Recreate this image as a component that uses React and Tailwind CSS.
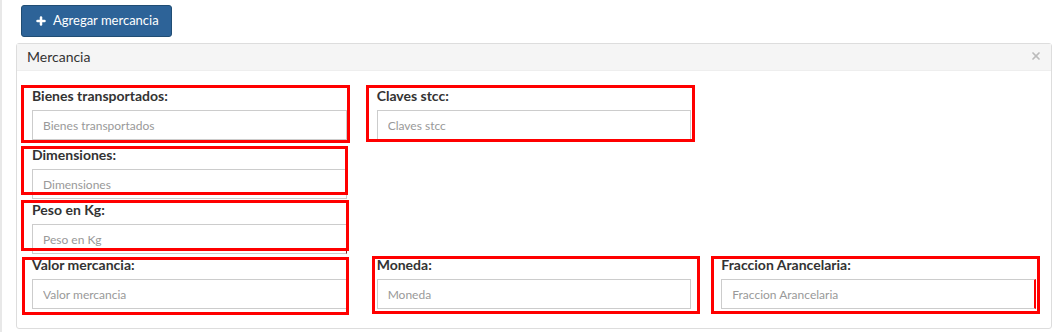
import { Plus, X } from "lucide-react";

const font = { fontFamily: "Lato, 'Open Sans', sans-serif" };

function Field({ label, box, inputClass = "" }) {
  return (
    <div className="relative">
      <label className="block h-[20px] leading-[20px] text-[14px] font-bold text-[#333] mb-[4px]">
        {label}:
      </label>
      <input
        type="text"
        placeholder={label}
        className={
          "block w-full h-[30px] border border-[#ccc] bg-white px-[10px] text-[12px] text-[#555] placeholder:text-[#999] outline-none " +
          inputClass
        }
      />
      <div className={"absolute border-[3px] border-[#ff0000] pointer-events-none " + box} />
    </div>
  );
}

export default function App() {
  return (
    <div className="min-h-screen bg-white" style={font}>
      <div className="border-l-2 border-[#e8e8e8] pl-[14px] pt-[5px] min-h-[332px]">
        <button className="ml-[5px] h-[32px] w-[151px] flex items-center gap-[6px] pl-[13px] rounded-[3px] bg-[#2d6398] border border-[#204d74] text-white text-[13px]">
          <Plus size={12} strokeWidth={5} />
          Agregar mercancia
        </button>

        <div className="mt-[6px] w-[1036px] border border-[#ddd] rounded-[3px] bg-white">
          <div className="h-[27px] bg-[#f5f5f5] border-b border-[#eee] flex items-center justify-between pl-[10px] pr-[9px] pb-[1px] text-[14px] text-[#333]">
            <span>Mercancia</span>
            <X size={12} strokeWidth={3.5} className="text-[#bbb] mb-[2px]" />
          </div>

          <div className="pt-[15px] pb-[19px] grid grid-cols-3">
            <div className="px-[15px]">
              <Field label="Bienes transportados" box="-left-[11px] -right-[3px] -top-[1px] -bottom-[3px]" />
            </div>
            <div className="px-[15px]">
              <Field label="Claves stcc" box="-left-[11px] -right-[4px] -top-[1px] -bottom-[2px]" />
            </div>
            <div />

            <div className="px-[15px] mt-[5px]">
              <Field label="Dimensiones" box="-left-[11px] -right-[1px] top-[1px] bottom-[4px]" />
            </div>
            <div />
            <div />

            <div className="px-[15px] mt-[1px]">
              <Field
                label="Peso en Kg"
                inputClass="!border-r-[#8b1a1a]"
                box="-left-[11px] -right-[2px] top-0 bottom-[3px]"
              />
            </div>
            <div />
            <div />

            <div className="px-[15px] mt-[1px]">
              <Field label="Valor mercancia" box="-left-[10px] -right-[2px] top-[2px] -bottom-[6px]" />
            </div>
            <div className="px-[15px] mt-[1px]">
              <Field label="Moneda" box="-left-[5px] -right-[9px] top-[1px] -bottom-[5px]" />
            </div>
            <div className="px-[15px] mt-[1px]">
              <Field
                label="Fraccion Arancelaria"
                inputClass="!border-r-[#ff0000] !border-r-2"
                box="-left-[10px] -right-[4px] top-[1px] -bottom-[5px]"
              />
            </div>
          </div>
        </div>
      </div>
    </div>
  );
}
